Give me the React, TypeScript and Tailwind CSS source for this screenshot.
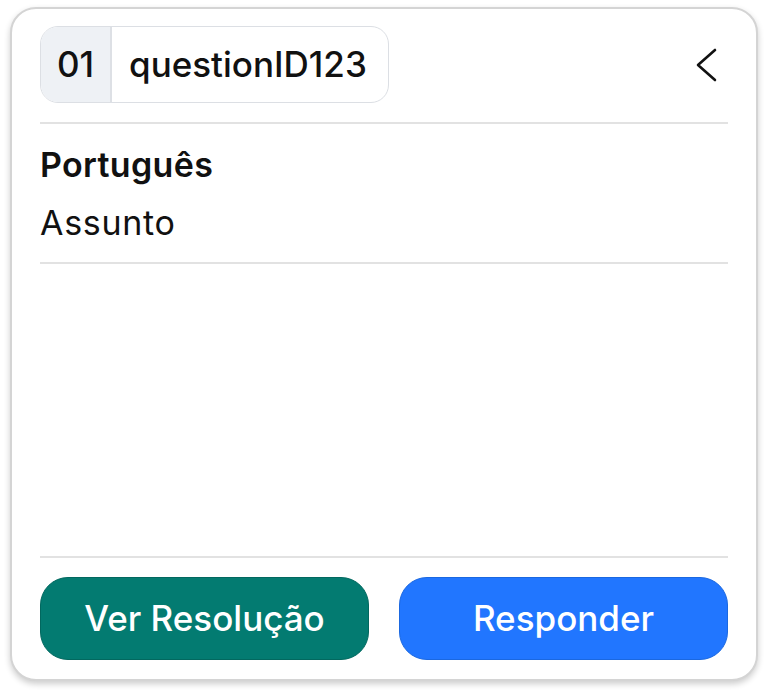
export default function App() {
  return (
    <div className="w-[768px] h-[693px] bg-white pt-[7px] pl-[10px]" style={{ fontFamily: "Inter, 'Noto Sans', sans-serif" }}>
      <div className="w-[748px] h-[674px] rounded-[26px] border-2 border-[#d4d4d4] bg-white shadow-[0_3px_6px_rgba(0,0,0,0.2)] px-[28px] pt-[17px] pb-[19px] flex flex-col">
        <div className="flex items-center justify-between">
          <div className="flex h-[77px] rounded-[18px] border border-[#dcdfe4] overflow-hidden text-[#111] text-[35px] font-medium">
            <div className="w-[71px] bg-[#eef1f5] border-r-2 border-[#dde0e5] flex items-center justify-center">01</div>
            <div className="pl-[17px] pr-[21px] flex items-center">questionID123</div>
          </div>
          <svg width="24" height="36" viewBox="0 0 24 36" fill="none" stroke="#111" strokeWidth="2.6" strokeLinecap="round" strokeLinejoin="round" className="mr-[9px]">
            <polyline points="20 3 3 18 20 33" />
          </svg>
        </div>
        <div className="h-[2px] bg-[#e2e2e2] mt-[19px]" />
        <div className="pt-[12px] pb-[10px] text-[#111] text-[34px] leading-[58px]">
          <div className="font-semibold tracking-[0.01em]">Português</div>
          <div className="tracking-[0.02em]">Assunto</div>
        </div>
        <div className="h-[2px] bg-[#e2e2e2]" />
        <div className="flex-1" />
        <div className="h-[2px] bg-[#e2e2e2]" />
        <div className="flex gap-[30px] mt-[19px]">
          <button className="flex-1 h-[83px] rounded-[28px] bg-[#037b71] border border-[#02685f] text-white text-[35px] font-medium">Ver Resolução</button>
          <button className="flex-1 h-[83px] rounded-[28px] bg-[#2176ff] border border-[#1b68e0] text-white text-[35px] font-medium">Responder</button>
        </div>
      </div>
    </div>
  );
}
